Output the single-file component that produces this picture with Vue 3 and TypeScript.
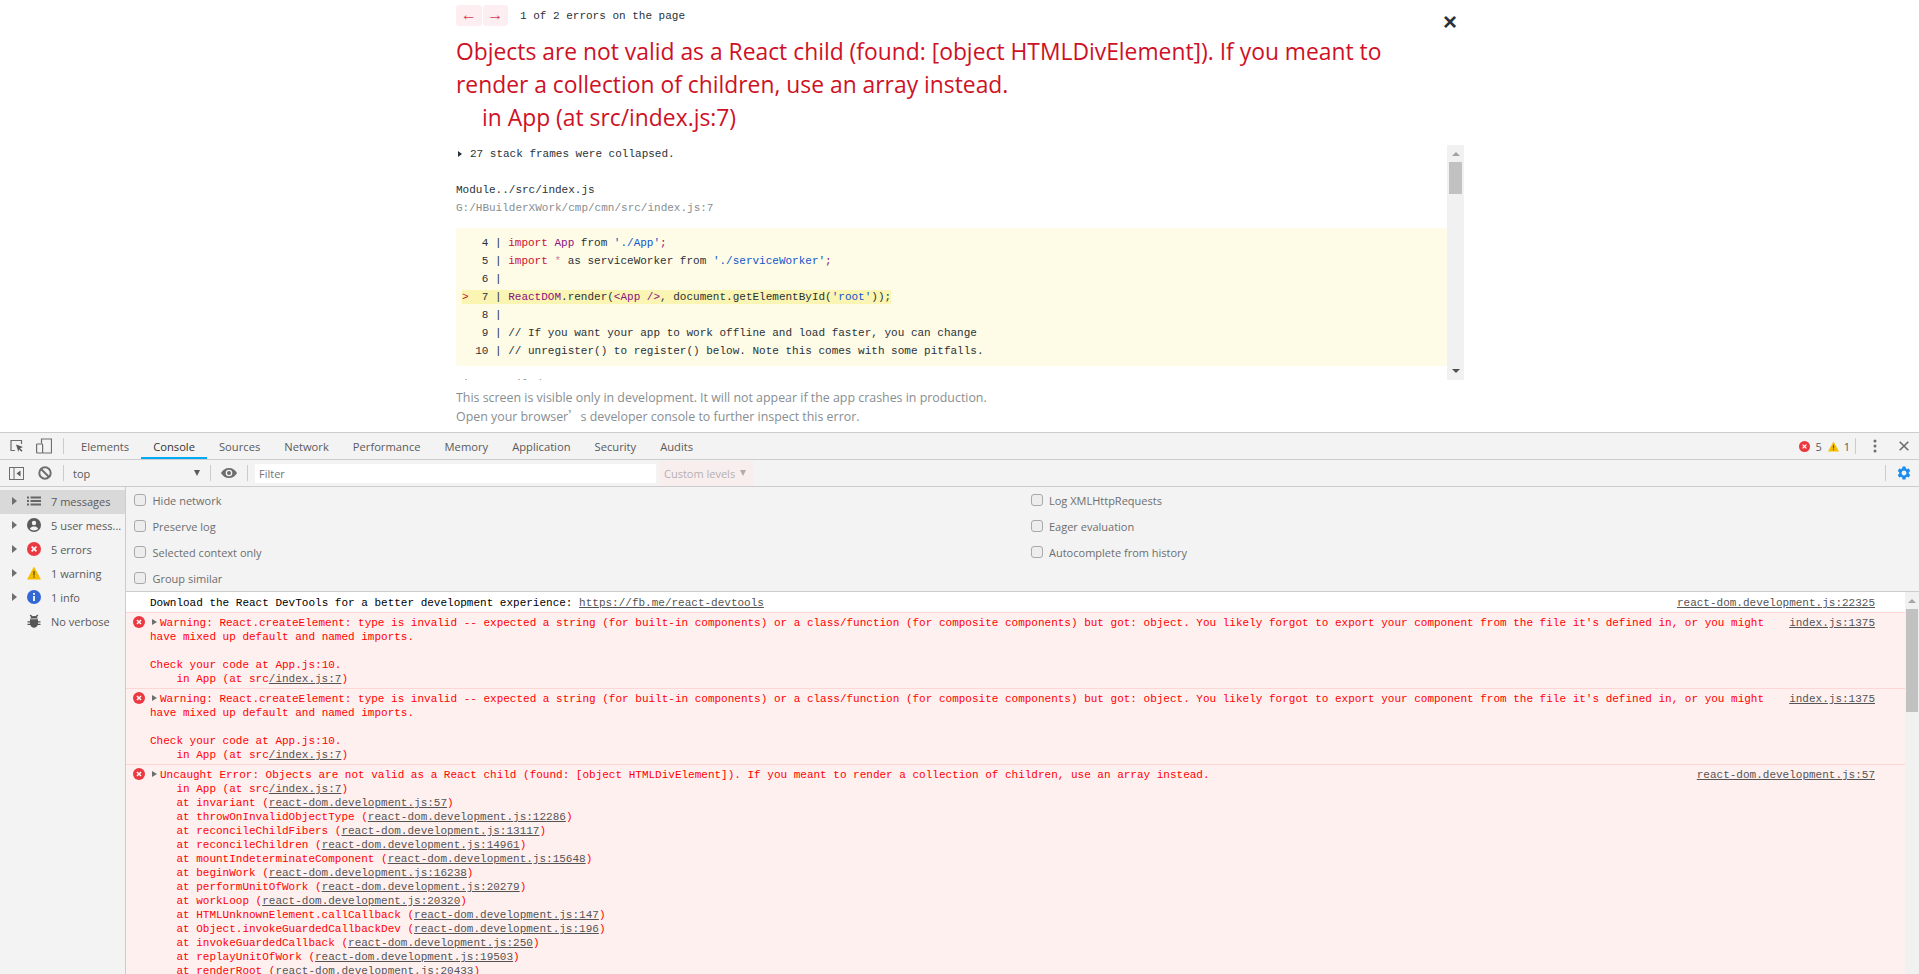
<script setup lang="ts">
interface Frame { name: string; link: string }
interface SideItem { icon: string; label: string; arrow: boolean; selected?: boolean }

const tabs: string[] = ['Elements', 'Console', 'Sources', 'Network', 'Performance', 'Memory', 'Application', 'Security', 'Audits']

const sideItems: SideItem[] = [
  { icon: 'list', label: '7 messages', arrow: true, selected: true },
  { icon: 'user', label: '5 user mess...', arrow: true },
  { icon: 'err', label: '5 errors', arrow: true },
  { icon: 'warn', label: '1 warning', arrow: true },
  { icon: 'info', label: '1 info', arrow: true },
  { icon: 'bug', label: 'No verbose', arrow: false }
]

const leftChecks: string[] = ['Hide network', 'Preserve log', 'Selected context only', 'Group similar']
const rightChecks: string[] = ['Log XMLHttpRequests', 'Eager evaluation', 'Autocomplete from history']

const warningFirst = "Warning: React.createElement: type is invalid -- expected a string (for built-in components) or a class/function (for composite components) but got: object. You likely forgot to export your component from the file it's defined in, or you might"

const frames: Frame[] = [
  { name: 'invariant', link: 'react-dom.development.js:57' },
  { name: 'throwOnInvalidObjectType', link: 'react-dom.development.js:12286' },
  { name: 'reconcileChildFibers', link: 'react-dom.development.js:13117' },
  { name: 'reconcileChildren', link: 'react-dom.development.js:14961' },
  { name: 'mountIndeterminateComponent', link: 'react-dom.development.js:15648' },
  { name: 'beginWork', link: 'react-dom.development.js:16238' },
  { name: 'performUnitOfWork', link: 'react-dom.development.js:20279' },
  { name: 'workLoop', link: 'react-dom.development.js:20320' },
  { name: 'HTMLUnknownElement.callCallback', link: 'react-dom.development.js:147' },
  { name: 'Object.invokeGuardedCallbackDev', link: 'react-dom.development.js:196' },
  { name: 'invokeGuardedCallback', link: 'react-dom.development.js:250' },
  { name: 'replayUnitOfWork', link: 'react-dom.development.js:19503' },
  { name: 'renderRoot', link: 'react-dom.development.js:20433' }
]
</script>

<template>
  <div class="page">
    <svg class="defs" aria-hidden="true">
      <symbol id="i-err" viewBox="0 0 14 14">
        <circle cx="7" cy="7" r="7" fill="#eb3941" />
        <path d="M4.6 4.6l4.8 4.8M9.4 4.6l-4.8 4.8" stroke="#fff" stroke-width="1.6" />
      </symbol>
      <symbol id="i-warn" viewBox="0 0 14 14">
        <path d="M7 0.5L14 13.5H0z" fill="#f4bd00" />
        <path d="M7 5v4.4M7 10.4v1.4" stroke="#6a5200" stroke-width="1.4" />
      </symbol>
      <symbol id="i-info" viewBox="0 0 14 14">
        <circle cx="7" cy="7" r="7" fill="#3367d6" />
        <path d="M7 3v1.8M7 6v5" stroke="#fff" stroke-width="1.8" />
      </symbol>
      <symbol id="i-user" viewBox="0 0 14 14">
        <circle cx="7" cy="7" r="7" fill="#5a5a5a" />
        <circle cx="7" cy="5" r="2.2" fill="#f3f3f3" />
        <path d="M2.8 10.8C3.6 8.9 5.4 8.4 7 8.4s3.4.5 4.2 2.4C10.2 12 8.6 12.4 7 12.4s-3.2-.4-4.2-1.6z" fill="#f3f3f3" />
      </symbol>
      <symbol id="i-list" viewBox="0 0 14 14">
        <path d="M0 2.5h2v2H0zM0 6h2v2H0zM0 9.500h2v2H0zM3.500 2.500H14v2H3.500zM3.500 6H14v2H3.500zM3.500 9.500H14v2H3.500z" fill="#666" />
      </symbol>
      <symbol id="i-bug" viewBox="0 0 14 14">
        <path d="M3.700 0.500L5.400 2.300a4 4 0 0 1 3.200 0L10.300 0.500l1 .9-1.400 1.600c.4.4.7.9.9 1.500H3.200c.2-.6.5-1.100.9-1.500L2.700 1.400zM3 5.300h8v1.900h2.500v1.300H11v1.200h2.500V11H10.700C10 12.700 8.600 13.700 7 13.700S4 12.700 3.300 11H.5V9.700H3V8.500H.5V7.200H3z" fill="#555" />
      </symbol>
    </svg>

    <!-- error overlay -->
    <section class="overlay">
      <button class="close" type="button" aria-label="Close">×</button>
      <nav class="pager">
        <span class="pager-btns">
          <span class="pager-btn">←</span>
          <span class="pager-btn">→</span>
        </span>
        <span class="pager-text">1 of 2 errors on the page</span>
      </nav>
      <h1 class="title">Objects are not valid as a React child (found: [object HTMLDivElement]). If you meant to<br />render a collection of children, use an array instead.<br /><span class="title-indent">in App (at src/index.js:7)</span></h1>

      <div class="scroller">
        <div class="scroll-body">
          <div class="mono collapsed"><span class="tri-small"></span>27 stack frames were collapsed.</div>
          <div class="mono module">Module../src/index.js</div>
          <div class="mono path">G:/HBuilderXWork/cmp/cmn/src/index.js:7</div>
          <pre class="mono code"><span class="ln">   4 | </span><span class="kw">import</span> <span class="id">App</span> from <span class="str">'./App'</span><span class="id">;</span>
<span class="ln">   5 | </span><span class="kw">import</span> <span class="star">*</span> as serviceWorker from <span class="str">'./serviceWorker'</span><span class="id">;</span>
<span class="ln">   6 |</span>
<span class="hl"><span class="mark">&gt;</span><span class="ln">  7 | </span><span class="id">ReactDOM</span>.render(<span class="id">&lt;App /&gt;</span>, document.getElementById(<span class="str">'root'</span>));</span>
<span class="ln">   8 |</span>
<span class="ln">   9 | </span>// If you want your app to work offline and load faster, you can change
<span class="ln">  10 | </span>// unregister() to register() below. Note this comes with some pitfalls.</pre>
          <div class="mono path compiled">View compiled</div>
        </div>
        <div class="pane-scrollbar">
          <span class="up light"></span>
          <span class="pane-thumb"></span>
          <span class="spacer"></span>
          <span class="down"></span>
        </div>
      </div>
      <footer class="note">
        <div>This screen is visible only in development. It will not appear if the app crashes in production.</div>
        <div>Open your browser<span class="cjk">’</span>s developer console to further inspect this error.</div>
      </footer>
    </section>

    <!-- devtools -->
    <section class="devtools">
      <header class="bar tabbar">
        <svg class="inspect" width="14" height="14" viewBox="0 0 14 14">
          <path d="M5 11.500H1V1.500h10.500v3.500" fill="none" stroke="#6e6e6e" stroke-width="1.200" />
          <path d="M6 5.500l7 2.600-2.900 1.100 2.400 2.600-1 1-2.500-2.500L8.400 13z" fill="#5a5a5a" />
        </svg>
        <svg class="device" width="16" height="16" viewBox="0 0 16 16">
          <path d="M5.500 5.500V1h10v14H7" fill="none" stroke="#6e6e6e" stroke-width="1.200" />
          <rect x="0.600" y="6" width="6" height="9" rx="0.500" fill="none" stroke="#6e6e6e" stroke-width="1.200" />
        </svg>
        <span class="sep sep-first"></span>
        <span v-for="t in tabs" :key="t" class="tab" :class="{ active: t === 'Console' }">{{ t }}</span>
        <span class="spacer"></span>
        <svg class="count-icon" width="11" height="11"><use href="#i-err" /></svg>
        <span class="count">5</span>
        <svg class="count-icon warn-count" width="11" height="11"><use href="#i-warn" /></svg>
        <span class="count">1</span>
        <span class="sep sep-count"></span>
        <svg class="dots" width="4" height="14" viewBox="0 0 4 14">
          <circle cx="2" cy="2" r="1.500" fill="#6e6e6e" />
          <circle cx="2" cy="7" r="1.500" fill="#6e6e6e" />
          <circle cx="2" cy="12" r="1.500" fill="#6e6e6e" />
        </svg>
        <svg class="tools-x" width="10" height="10" viewBox="0 0 10 10">
          <path d="M0.700 0.700l8.600 8.600M9.300 0.700L0.700 9.300" stroke="#6e6e6e" stroke-width="1.600" />
        </svg>
      </header>

      <div class="bar filterbar">
        <svg class="toggle" width="15" height="13" viewBox="0 0 15 13">
          <rect x="0.500" y="0.500" width="14" height="12" fill="none" stroke="#6e6e6e" />
          <path d="M5 0.500v12" stroke="#6e6e6e" />
          <path d="M11.500 3.500v6L7.500 6.500z" fill="#5a5a5a" />
        </svg>
        <svg class="ban" width="14" height="14" viewBox="0 0 14 14">
          <circle cx="7" cy="7" r="5.700" fill="none" stroke="#6e6e6e" stroke-width="2" />
          <path d="M3 3l8 8" stroke="#6e6e6e" stroke-width="2" />
        </svg>
        <span class="sep sep-first"></span>
        <span class="context"><span>top</span><span class="caret"></span></span>
        <span class="sep"></span>
        <svg class="eye" width="16" height="10" viewBox="0 0 16 10">
          <path d="M8 0C4.500 0 1.600 2 0 5c1.600 3 4.500 5 8 5s6.400-2 8-5c-1.600-3-4.500-5-8-5z" fill="#6e6e6e" />
          <circle cx="8" cy="5" r="3.300" fill="#f3f3f3" />
          <circle cx="8" cy="5" r="2" fill="#6e6e6e" />
        </svg>
        <span class="sep sep-eye"></span>
        <div class="filter">Filter</div>
        <div class="levels">Custom levels<span class="levels-caret"></span></div>
        <span class="spacer"></span>
        <span class="sep sep-gear"></span>
        <svg class="gear" width="16" height="16" viewBox="0 0 24 24">
          <path fill="#1a8cf0" d="M19.14 12.94c.04-.3.06-.61.06-.94 0-.32-.02-.64-.07-.94l2.03-1.58a.49.49 0 0 0 .12-.61l-1.92-3.32a.488.488 0 0 0-.59-.22l-2.39.96c-.5-.38-1.03-.7-1.62-.94l-.36-2.54a.484.484 0 0 0-.48-.41h-3.84c-.24 0-.43.17-.47.41l-.36 2.54c-.59.24-1.13.57-1.62.94l-2.39-.96c-.22-.08-.47 0-.59.22L2.74 8.87c-.12.21-.08.47.12.61l2.03 1.58c-.05.3-.09.63-.09.94s.02.64.07.94l-2.03 1.58a.49.49 0 0 0-.12.61l1.92 3.32c.12.22.37.29.59.22l2.39-.96c.5.38 1.03.7 1.62.94l.36 2.54c.05.24.24.41.48.41h3.84c.24 0 .44-.17.47-.41l.36-2.54c.59-.24 1.13-.56 1.62-.94l2.39.96c.22.08.47 0 .59-.22l1.92-3.32c.12-.22.07-.47-.12-.61l-2.01-1.58zM12 15.600c-1.980 0-3.600-1.620-3.600-3.600s1.620-3.600 3.600-3.600 3.600 1.620 3.600 3.600-1.620 3.600-3.600 3.600z" />
        </svg>
      </div>

      <div class="panel">
        <aside class="sidebar">
          <div v-for="s in sideItems" :key="s.label" class="side-row" :class="{ selected: s.selected }">
            <span class="side-arrow" :class="{ hidden: !s.arrow }"></span>
            <svg class="side-icon" width="14" height="14"><use :href="'#i-' + s.icon" /></svg>
            <span class="side-label">{{ s.label }}</span>
          </div>
        </aside>

        <div class="main">
          <div class="settings">
            <div class="check-col">
              <label v-for="c in leftChecks" :key="c" class="check"><span class="box"></span>{{ c }}</label>
            </div>
            <div class="check-col">
              <label v-for="c in rightChecks" :key="c" class="check"><span class="box"></span>{{ c }}</label>
            </div>
          </div>

          <div class="log-wrap">
            <div class="log mono">
              <div class="row plain">
                <span class="gutter"></span>
                <div class="msg">Download the React DevTools for a better development experience: <a class="link">https://fb.me/react-devtools</a></div>
                <a class="link src">react-dom.development.js:22325</a>
              </div>

              <div v-for="n in 2" :key="n" class="row error">
                <span class="gutter"><svg class="row-icon" width="12" height="12"><use href="#i-err" /></svg></span>
                <div class="msg">
                  <div><span class="row-tri"></span>{{ warningFirst }}</div>
                  <div>have mixed up default and named imports.</div>
                  <div class="blank"></div>
                  <div>Check your code at App.js:10.</div>
                  <div class="indent">in App (at src<a class="link">/index.js:7</a>)</div>
                </div>
                <a class="link src">index.js:1375</a>
              </div>

              <div class="row error">
                <span class="gutter"><svg class="row-icon" width="12" height="12"><use href="#i-err" /></svg></span>
                <div class="msg">
                  <div><span class="row-tri"></span>Uncaught Error: Objects are not valid as a React child (found: [object HTMLDivElement]). If you meant to render a collection of children, use an array instead.</div>
                  <div class="indent">in App (at src<a class="link">/index.js:7</a>)</div>
                  <div v-for="f in frames" :key="f.name" class="indent">at {{ f.name }} (<a class="link">{{ f.link }}</a>)</div>
                </div>
                <a class="link src">react-dom.development.js:57</a>
              </div>
            </div>
            <div class="log-scrollbar">
              <span class="up light"></span>
              <span class="log-thumb"></span>
            </div>
          </div>
        </div>
      </div>
    </section>
  </div>
</template>

<style>
html, body { margin: 0; padding: 0; background: #fff; overflow: hidden; }
</style>

<style scoped>
.page {
  width: 1919px;
  height: 974px;
  display: flex;
  flex-direction: column;
  overflow: hidden;
  font-family: "Open Sans", "Liberation Sans", sans-serif;
}
.defs { position: absolute; width: 0; height: 0; }
.mono { font-family: "Liberation Mono", monospace; font-size: 11px; }
.spacer { flex: 1; }

/* overlay */
.overlay {
  position: relative;
  height: 432px;
  flex: none;
  box-sizing: border-box;
  padding: 5px 0 0 456px;
  background: #fff;
  color: #293238;
}
.close {
  position: absolute;
  left: 1440px;
  top: 8px;
  width: 20px;
  height: 28px;
  padding: 0;
  border: 0;
  background: none;
  color: #293238;
  font: 700 24px/28px "Liberation Sans", sans-serif;
}
.pager { display: flex; align-items: center; height: 21px; }
.pager-btns { display: flex; gap: 1px; width: 52px; }
.pager-btn {
  width: 26px;
  height: 21px;
  background: #fdeff1;
  color: #d83a4e;
  font: 16px/19px "Liberation Sans", sans-serif;
  text-align: center;
  border-radius: 3px;
}
.pager-text {
  margin-left: 12px;
  padding-top: 2px;
  font: 11px/21px "Liberation Mono", monospace;
}
.title {
  width: 1000px;
  margin: 9px 0 0;
  color: #ce1126;
  font-weight: 400;
  font-size: 22.85px;
  line-height: 33px;
  white-space: nowrap;
}
.title-indent { padding-left: 26px; }
.scroller { display: flex; width: 1008px; height: 235px; margin-top: 11px; }
.scroll-body { flex: 1; min-width: 0; overflow: hidden; line-height: 18px; }
.collapsed { display: flex; align-items: center; line-height: 18px; }
.tri-small {
  width: 0;
  height: 0;
  margin: 0 8px 0 2px;
  border-left: 4px solid #293238;
  border-top: 3px solid transparent;
  border-bottom: 3px solid transparent;
}
.module { margin-top: 18px; line-height: 18px; }
.path { color: #878e91; line-height: 18px; }
.code {
  margin: 11px 0 0;
  padding: 6px;
  height: 138px;
  box-sizing: border-box;
  background: #fefbe7;
  border-radius: 3px;
  line-height: 18px;
  color: #293238;
  white-space: pre;
}
.ln { color: #293238; }
.kw { color: #d0102e; }
.id { color: #881280; }
.str { color: #1155cc; }
.star { color: #c77d9b; }
.hl { background: #fbf5b4; display: inline-block; line-height: 14px; }
.mark { color: #ce1126; }
.compiled { margin-top: 9px; }
.pane-scrollbar {
  flex: none;
  width: 17px;
  background: #f1f1f1;
  display: flex;
  flex-direction: column;
  align-items: center;
}
.up, .down {
  flex: none;
  width: 0;
  height: 0;
  border-left: 4px solid transparent;
  border-right: 4px solid transparent;
}
.up { border-bottom: 4px solid #505050; margin-top: 7px; }
.up.light { border-bottom-color: #a3a3a3; }
.down { border-top: 4px solid #505050; margin-bottom: 7px; }
.pane-thumb { flex: none; width: 13px; height: 32px; margin-top: 6px; background: #c1c1c1; }
.note {
  margin-top: 9px;
  color: #878e91;
  font-size: 12.4px;
  line-height: 18px;
}
.cjk { font-family: "Noto Sans CJK SC", sans-serif; }

/* devtools chrome */
.devtools {
  flex: 1;
  min-height: 0;
  display: flex;
  flex-direction: column;
  background: #f3f3f3;
  color: #5a5a5a;
  font-size: 11px;
  border-top: 1px solid #ccc;
}
.bar {
  flex: none;
  height: 26px;
  display: flex;
  align-items: center;
  border-bottom: 1px solid #ccc;
}
.sep { flex: none; width: 1px; height: 16px; background: #ccc; }
.inspect { margin-left: 10px; flex: none; }
.device { margin-left: 12px; flex: none; }
.sep-first { margin-left: 11px; }
.tabbar .sep-first { margin-left: 11px; margin-right: 5px; }
.tab {
  height: 26px;
  line-height: 27px;
  padding: 0 12px;
  box-sizing: border-box;
  color: #5a5a5a;
  font-size: 11.2px;
}
.tab.active { color: #333; border-bottom: 2px solid #03a9f4; }
.count-icon { flex: none; }
.warn-count { margin-left: 6px; }
.count { margin-left: 5px; font-size: 11px; }
.sep-count { margin-left: 5px; }
.dots { margin-left: 17px; flex: none; }
.tools-x { margin-left: 22px; margin-right: 10px; flex: none; }

.toggle { margin-left: 9px; flex: none; }
.ban { margin-left: 14px; flex: none; }
.context {
  width: 146px;
  box-sizing: border-box;
  padding: 0 10px 0 9px;
  display: flex;
  justify-content: space-between;
  align-items: center;
  font-size: 11px;
  color: #5a5a5a;
}
.caret {
  width: 0;
  height: 0;
  border-left: 3.5px solid transparent;
  border-right: 3.5px solid transparent;
  border-top: 6px solid #5a5a5a;
}
.eye { margin-left: 10px; flex: none; }
.sep-eye { margin-left: 10px; }
.filter {
  width: 401px;
  height: 19px;
  margin-left: 7px;
  padding-left: 4px;
  box-sizing: border-box;
  background: #fff;
  color: #757575;
  line-height: 20px;
}
.levels {
  width: 95px;
  height: 25px;
  margin-left: 3px;
  padding-left: 5px;
  box-sizing: border-box;
  display: flex;
  align-items: center;
  background: #f8eeee;
  color: #b5b0b0;
}
.levels-caret {
  width: 0;
  height: 0;
  margin-left: 5px;
  border-left: 3.5px solid transparent;
  border-right: 3.5px solid transparent;
  border-top: 6px solid #b0acac;
}
.sep-gear { height: 16px; }
.gear { margin: 0 7px 0 10px; flex: none; }

.panel { flex: 1; min-height: 0; display: flex; }
.sidebar {
  flex: none;
  width: 126px;
  box-sizing: border-box;
  padding-top: 3px;
  border-right: 1px solid #ccc;
}
.side-row {
  height: 24px;
  padding-bottom: 2px;
  box-sizing: border-box;
  display: flex;
  align-items: center;
}
.side-row.selected { background: #d9d9d9; }
.side-arrow {
  flex: none;
  width: 0;
  height: 0;
  margin-left: 12px;
  border-left: 5px solid #6e6e6e;
  border-top: 4px solid transparent;
  border-bottom: 4px solid transparent;
}
.side-arrow.hidden { visibility: hidden; }
.side-icon { flex: none; margin-left: 10px; }
.side-label { margin-left: 10px; white-space: nowrap; font-size: 11px; color: #5a5a5a; }

.main { flex: 1; min-width: 0; display: flex; flex-direction: column; }
.settings {
  flex: none;
  height: 105px;
  box-sizing: border-box;
  display: grid;
  grid-template-columns: 1fr 1fr;
  border-bottom: 1px solid #ccc;
}
.check-col { padding-left: 8px; }
.check { height: 26px; display: flex; align-items: center; color: #6e6e6e; font-size: 11px; }
.box {
  flex: none;
  width: 10px;
  height: 10px;
  margin-right: 6.5px;
  border: 1px solid #a9a9a9;
  border-radius: 3px;
  background: #ededed;
}

.log-wrap { flex: 1; min-height: 0; display: flex; background: #fff; }
.log { flex: 1; min-width: 0; overflow: hidden; line-height: 14px; color: #000; }
.row { display: flex; padding: 4px 30px 2px 0; white-space: pre; box-sizing: border-box; }
.row.plain { height: 20px; }
.row.error {
  padding-top: 3px;
  background: #fff0f0;
  border-top: 1px solid #ffd6d6;
  color: #f00;
}
.gutter { flex: none; width: 24px; padding-left: 7px; box-sizing: border-box; }
.row-icon { display: block; }
.msg { flex: 1; min-width: 0; }
.blank { height: 14px; }
.indent { padding-left: 26.4px; }
.row-tri {
  display: inline-block;
  width: 0;
  height: 0;
  margin: 0 3px 0 2px;
  vertical-align: 1px;
  border-left: 5px solid #6e6e6e;
  border-top: 3.5px solid transparent;
  border-bottom: 3.5px solid transparent;
}
.link { color: #545454; text-decoration: underline; }
.src { flex: none; }
.log-scrollbar {
  flex: none;
  width: 14px;
  background: #f1f1f1;
  display: flex;
  flex-direction: column;
  align-items: center;
}
.log-thumb { flex: none; width: 12px; height: 103px; margin-top: 6px; background: #c1c1c1; }
</style>
